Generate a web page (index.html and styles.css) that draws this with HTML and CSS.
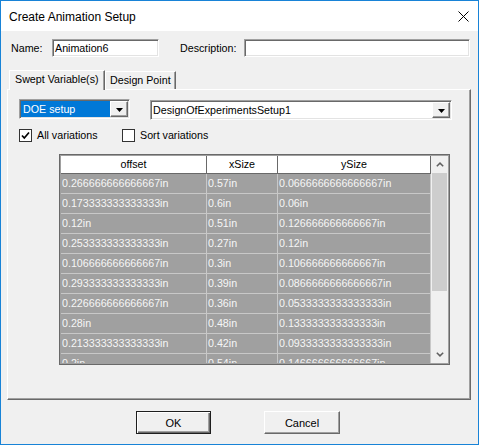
FILE: index.html
```html
<!DOCTYPE html>
<html>
<head>
<meta charset="utf-8">
<title>Create Animation Setup</title>
<link rel="stylesheet" href="styles.css">
</head>
<body>
<div class="window">
  <div class="titlebar">
    <span class="title">Create Animation Setup</span>
    <svg class="close" width="11" height="11" viewBox="0 0 11 11"><path d="M0.5 0.5L10.5 10.5M10.5 0.5L0.5 10.5" stroke="#000" stroke-width="1" fill="none"/></svg>
  </div>
  <div class="content">
    <div class="namerow">
      <span class="lbl-name">Name:</span>
      <div class="edit edit-name">Animation6</div>
      <span class="lbl-desc">Description:</span>
      <div class="edit edit-desc"></div>
    </div>
    <div class="tabs">
      <div class="tab tab-active">Swept Variable(s)</div>
      <div class="tab tab-inactive">Design Point</div>
    </div>
    <div class="panel">
      <div class="ddrow">
        <div class="combo combo1">
          <div class="combo-sel">DOE setup</div>
          <div class="combo-btn"><svg width="7" height="4" viewBox="0 0 7 4"><path d="M0 0H7L3.5 4Z" fill="#000"/></svg></div>
        </div>
        <div class="combo combo2">
          <div class="combo-text">DesignOfExperimentsSetup1</div>
          <div class="combo-btn"><svg width="7" height="4" viewBox="0 0 7 4"><path d="M0 0H7L3.5 4Z" fill="#000"/></svg></div>
        </div>
      </div>
      <div class="checks">
        <div class="check check1">
          <span class="box"><svg width="11" height="11" viewBox="0 0 11 11"><path d="M2 5.5L4.3 8L9 2.5" stroke="#000" stroke-width="1.7" fill="none"/></svg></span>
          <span class="check-lbl">All variations</span>
        </div>
        <div class="check">
          <span class="box"></span>
          <span class="check-lbl">Sort variations</span>
        </div>
      </div>
      <div class="grid">
        <div class="table">
          <div class="hd">offset</div><div class="hd">xSize</div><div class="hd">ySize</div>
          <div class="cell">0.266666666666667in</div><div class="cell">0.57in</div><div class="cell">0.0666666666666667in</div>
          <div class="cell">0.173333333333333in</div><div class="cell">0.6in</div><div class="cell">0.06in</div>
          <div class="cell">0.12in</div><div class="cell">0.51in</div><div class="cell">0.126666666666667in</div>
          <div class="cell">0.253333333333333in</div><div class="cell">0.27in</div><div class="cell">0.12in</div>
          <div class="cell">0.106666666666667in</div><div class="cell">0.3in</div><div class="cell">0.106666666666667in</div>
          <div class="cell">0.293333333333333in</div><div class="cell">0.39in</div><div class="cell">0.0866666666666667in</div>
          <div class="cell">0.226666666666667in</div><div class="cell">0.36in</div><div class="cell">0.0533333333333333in</div>
          <div class="cell">0.28in</div><div class="cell">0.48in</div><div class="cell">0.133333333333333in</div>
          <div class="cell">0.213333333333333in</div><div class="cell">0.42in</div><div class="cell">0.0933333333333333in</div>
          <div class="cell">0.2in</div><div class="cell">0.54in</div><div class="cell">0.146666666666667in</div>
        </div>
        <div class="vscroll">
          <div class="sb-btn"><svg width="8" height="5" viewBox="0 0 8 5"><path d="M0.8 4.3L4 1.1L7.2 4.3" stroke="#606060" stroke-width="1.5" fill="none"/></svg></div>
          <div class="sb-thumb"></div>
          <div class="sb-track"></div>
          <div class="sb-btn"><svg width="8" height="5" viewBox="0 0 8 5"><path d="M0.8 0.7L4 3.9L7.2 0.7" stroke="#606060" stroke-width="1.5" fill="none"/></svg></div>
        </div>
      </div>
    </div>
    <div class="buttons">
      <div class="btn btn-default">OK</div>
      <div class="btn btn-cancel">Cancel</div>
    </div>
  </div>
</div>
</body>
</html>
```

FILE: styles.css
```css
html, body {
  margin: 0;
  padding: 0;
  background: #ffffff;
}

.window {
  width: 479px;
  height: 445px;
  box-sizing: border-box;
  border: 1px solid #1883d7;
  background: #f0f0f0;
  display: flex;
  flex-direction: column;
  font-family: "Liberation Sans", Arial, sans-serif;
  font-size: 10.7px;
  color: #000;
  overflow: hidden;
}

.titlebar {
  height: 30px;
  flex: 0 0 30px;
  background: #ffffff;
  display: flex;
  align-items: center;
  justify-content: space-between;
  padding: 0 9px 0 8px;
}

.title {
  font-size: 12px;
  line-height: 16px;
  padding-top: 1px;
}

.close {
  display: block;
}

.content {
  display: flex;
  flex-direction: column;
}

/* name row */
.namerow {
  margin-top: 8px;
  height: 18px;
  display: flex;
  align-items: center;
  padding-left: 10px;
}

.lbl-name {
  width: 41px;
}

.lbl-desc {
  margin-left: 21px;
  width: 64px;
}

.edit {
  box-sizing: border-box;
  height: 18px;
  background: #fff;
  border: 1px solid;
  border-color: #a0a0a0 #ffffff #ffffff #a0a0a0;
  box-shadow: inset 1px 1px 0 #696969, inset -1px -1px 0 #e3e3e3;
  padding: 1px 2px;
  line-height: 14px;
  white-space: nowrap;
}

.edit-name {
  width: 107px;
}

.edit-desc {
  width: 226px;
}

/* tabs */
.tabs {
  margin-top: 13px;
  height: 19px;
  margin-left: 6px;
  padding-left: 2px;
  display: flex;
  align-items: flex-end;
}

.tab {
  box-sizing: border-box;
  background: #f0f0f0;
  border-top: 1px solid #ffffff;
  border-left: 1px solid #ffffff;
  border-right: 1px solid #696969;
  white-space: nowrap;
}

.tab-active {
  width: 96px;
  height: 20px;
  margin-bottom: -1px;
  position: relative;
  z-index: 1;
  padding-left: 5px;
  line-height: 17px;
  box-shadow: inset -1px 0 0 #a0a0a0;
}

.tab-inactive {
  width: 71px;
  height: 18px;
  padding-left: 4px;
  line-height: 17px;
  box-shadow: inset -1px 0 0 #a0a0a0;
}

/* panel */
.panel {
  margin-left: 6px;
  width: 464px;
  height: 311px;
  box-sizing: border-box;
  border: 1px solid;
  border-color: #ffffff #696969 #696969 #ffffff;
  box-shadow: inset -1px -1px 0 #a0a0a0;
  padding: 9px 0 0 11px;
  display: flex;
  flex-direction: column;
}

.ddrow {
  display: flex;
  align-items: flex-start;
  height: 21px;
}

.combo {
  box-sizing: border-box;
  height: 20px;
  border: 1px solid;
  border-color: #a0a0a0 #ffffff #ffffff #a0a0a0;
  box-shadow: inset 1px 1px 0 #696969, inset -1px -1px 0 #e3e3e3;
  padding: 1px;
  display: flex;
  background: #fff;
}

.combo1 {
  width: 111px;
}

.combo2 {
  width: 302px;
  margin-left: 20px;
  margin-top: 1px;
}

.combo-sel {
  width: 89px;
  height: 16px;
  background: #0078d7;
  color: #fff;
  padding-left: 2px;
  box-sizing: border-box;
  line-height: 16px;
  white-space: nowrap;
}

.combo-text {
  flex: 1;
  height: 16px;
  line-height: 16px;
  padding-left: 1px;
  white-space: nowrap;
}

.combo-btn {
  box-sizing: border-box;
  width: 18px;
  height: 16px;
  background: #f0f0f0;
  border: 1px solid;
  border-color: #ffffff #696969 #696969 #ffffff;
  box-shadow: inset -1px -1px 0 #a0a0a0;
  display: flex;
  align-items: center;
  justify-content: center;
  margin-left: auto;
}

.combo-btn svg {
  display: block;
  margin-top: 1px;
}

/* checkboxes */
.checks {
  margin-top: 9px;
  height: 13px;
  display: flex;
  align-items: center;
}

.check {
  display: flex;
  align-items: center;
}

.check1 {
  width: 103px;
}

.box {
  box-sizing: border-box;
  width: 13px;
  height: 13px;
  border: 1px solid #333333;
  background: #fff;
  display: flex;
  align-items: center;
  justify-content: center;
}

.box svg {
  display: block;
}

.check-lbl {
  margin-left: 5px;
  line-height: 13px;
}

/* grid */
.grid {
  margin-top: 12px;
  margin-left: 40px;
  width: 391px;
  height: 211px;
  box-sizing: border-box;
  border: 1px solid #696969;
  padding: 1px;
  background: #a0a0a0;
  display: flex;
  overflow: hidden;
}

.table {
  width: 370px;
  height: 207px;
  overflow: hidden;
  display: grid;
  grid-template-columns: 146px 71px 153px;
  grid-template-rows: 18px;
  grid-auto-rows: 20px;
  align-content: start;
}

.hd {
  box-sizing: border-box;
  background: #ffffff;
  border-right: 1px solid #696969;
  border-bottom: 1px solid #696969;
  text-align: center;
  line-height: 17px;
  white-space: nowrap;
}

.cell {
  box-sizing: border-box;
  background: #a0a0a0;
  color: #f6f6f6;
  border-right: 1px solid #c8c8c8;
  border-bottom: 1px solid #c8c8c8;
  padding-left: 1px;
  line-height: 19px;
  white-space: nowrap;
  overflow: hidden;
}

.vscroll {
  width: 17px;
  height: 207px;
  background: #f0f0f0;
  display: flex;
  flex-direction: column;
}

.sb-btn {
  height: 17px;
  flex: 0 0 17px;
  display: flex;
  align-items: center;
  justify-content: center;
}

.sb-btn svg {
  display: block;
}

.sb-thumb {
  height: 118px;
  flex: 0 0 118px;
  margin: 0 1px;
  background: #cdcdcd;
}

.sb-track {
  flex: 1;
}

/* buttons */
.buttons {
  margin-top: 11px;
  display: flex;
  padding-left: 135px;
}

.btn {
  box-sizing: border-box;
  width: 75px;
  height: 23px;
  background: #f0f0f0;
  display: flex;
  align-items: center;
  justify-content: center;
  font-size: 11px;
  border: 1px solid;
}

.btn-default {
  border-color: #1e1e1e;
  box-shadow: inset 1px 1px 0 #ffffff, inset -1px -1px 0 #696969, inset -2px -2px 0 #a0a0a0;
}

.btn-cancel {
  margin-left: 53px;
  width: 76px;
  border-color: #ffffff #696969 #696969 #ffffff;
  box-shadow: inset -1px -1px 0 #a0a0a0;
}
```
